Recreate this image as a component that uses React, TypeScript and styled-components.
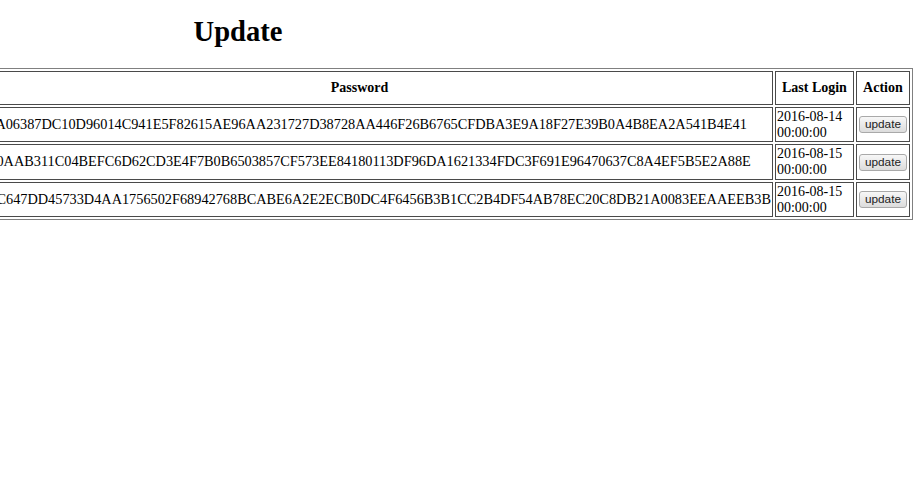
import React from "react";
import styled, { createGlobalStyle } from "styled-components";

const GlobalStyle = createGlobalStyle`
  html, body {
    margin: 0;
    padding: 0;
    background: #ffffff;
    color: #000000;
    font-family: "Liberation Serif", "Times New Roman", serif;
    overflow: hidden;
  }
`;

const Page = styled.div`
  width: 918px;
  height: 482px;
  overflow: hidden;
  display: flex;
  flex-direction: column;
`;

const Heading = styled.h1`
  width: 476px;
  margin: 16px 0 20px;
  font-size: 28.6px;
  font-weight: bold;
  text-align: center;
  line-height: 32px;
`;

const TableArea = styled.div`
  display: flex;
  justify-content: flex-end;
  padding-right: 5px;
  overflow: hidden;
`;

const Table = styled.table`
  flex: none;
  width: min-content;
  border: 1px solid #808080;
  border-spacing: 2px;
  border-collapse: separate;
  font-size: 14.3px;
`;

const Th = styled.th`
  border: 1px solid #4a4a4a;
  padding: 8px 6px;
  font-size: 14px;
  font-weight: bold;
  text-align: center;
  white-space: nowrap;
  line-height: 16px;
`;

const Td = styled.td`
  border: 1px solid #4a4a4a;
  padding: 1px;
  line-height: 15.7px;
  vertical-align: middle;
`;

const DateTd = styled(Td)`
  width: 66px;
  font-size: 14px;
`;

const Button = styled.button`
  font-family: "Liberation Sans", Arial, sans-serif;
  font-size: 11.8px;
  color: #222222;
  padding: 1px 5px;
  margin: 0 1px;
  border: 1px solid #a9a9a9;
  border-radius: 3px;
  background: linear-gradient(#f7f7f7, #dcdcdc);
  line-height: 13px;
`;

const PREFIX = "7E5D3F";

const rows = [
  {
    password:
      "A06387DC10D96014C941E5F82615AE96AA231727D38728AA446F26B6765CFDBA3E9A18F27E39B0A4B8EA2A541B4E41",
    date: "2016-08-14 00:00:00",
  },
  {
    password:
      "0AAB311C04BEFC6D62CD3E4F7B0B6503857CF573EE84180113DF96DA1621334FDC3F691E96470637C8A4EF5B5E2A88E",
    date: "2016-08-15 00:00:00",
  },
  {
    password:
      "C647DD45733D4AA1756502F68942768BCABE6A2E2ECB0DC4F6456B3B1CC2B4DF54AB78EC20C8DB21A0083EEAAEEB3B",
    date: "2016-08-15 00:00:00",
  },
];

export default function App() {
  return (
    <>
      <GlobalStyle />
      <Page>
        <Heading>Update</Heading>
        <TableArea>
          <Table>
            <thead>
              <tr>
                <Th>Password</Th>
                <Th>Last Login</Th>
                <Th>Action</Th>
              </tr>
            </thead>
            <tbody>
              {rows.map((r, i) => (
                <tr key={i}>
                  <Td>{PREFIX + r.password}</Td>
                  <DateTd>{r.date}</DateTd>
                  <Td>
                    <Button type="button">update</Button>
                  </Td>
                </tr>
              ))}
            </tbody>
          </Table>
        </TableArea>
      </Page>
    </>
  );
}
